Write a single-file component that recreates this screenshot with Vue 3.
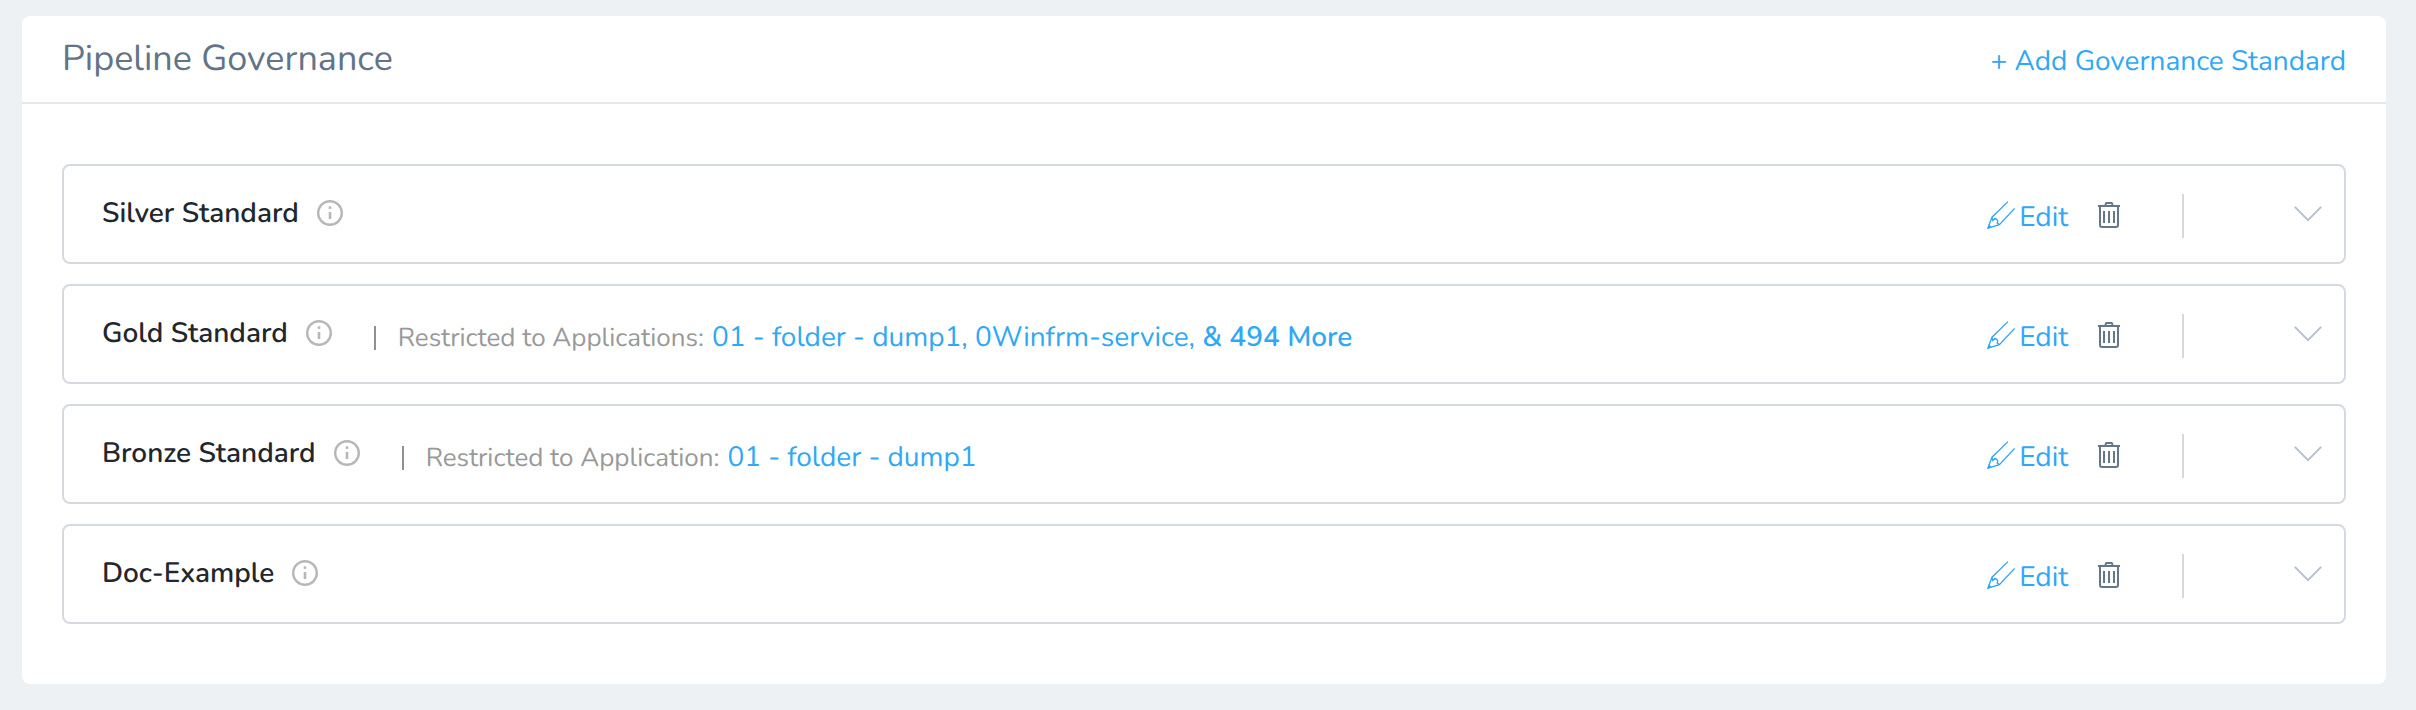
<script setup>
import { ref } from 'vue'

const standards = ref([
  { id: 1, name: 'Silver Standard', label: '', apps: '', more: '' },
  { id: 2, name: 'Gold Standard', label: 'Restricted to Applications:', apps: '01 - folder - dump1, 0Winfrm-service,', more: '& 494 More' },
  { id: 3, name: 'Bronze Standard', label: 'Restricted to Application:', apps: '01 - folder - dump1', more: '' },
  { id: 4, name: 'Doc-Example', label: '', apps: '', more: '' },
])
</script>

<template>
  <main class="card">
    <header class="head">
      <h1 class="title">Pipeline Governance</h1>
      <button class="link add" type="button">+ Add Governance Standard</button>
    </header>
    <ul class="list">
      <li v-for="s in standards" :key="s.id" class="row">
        <h2 class="name">{{ s.name }}</h2>
        <button class="icon info" type="button" :aria-label="'About ' + s.name">
          <svg width="26" height="26" viewBox="0 0 26 26" fill="none" stroke="#b7b7b7">
            <circle cx="13" cy="13" r="11.8" stroke-width="2.4" />
            <path d="M13 12v7" stroke-width="2.6" />
            <path d="M13 6.3v2.6" stroke-width="2.6" />
          </svg>
        </button>
        <p v-if="s.label" class="scope">
          <span class="bar"></span>
          <span class="label">{{ s.label }}</span>
          <a class="link" href="#">{{ s.apps }} <b v-if="s.more" class="more">{{ s.more }}</b></a>
        </p>
        <div class="actions">
          <button class="link edit" type="button">
            <svg width="28" height="28" viewBox="0 0 28 28" fill="none" stroke="#2fa8f5" stroke-width="1.3">
              <path d="M21 .6 5 16.2.8 27.2 12.4 23.6 27.6 7.4" />
              <path d="M5 16.200 5.800 19.600 8.200 17.400C10.600 18.600 11.400 20.200 10.200 22L12.400 23.600" />
              <path d="M.4 27.600 2 23 4.600 26.200z" fill="#2fa8f5" stroke="none" />
            </svg>
            <span>Edit</span>
          </button>
          <button class="icon trash" type="button" :aria-label="'Delete ' + s.name">
            <svg width="22" height="26" viewBox="0 0 22 26" fill="none" stroke="#65768a" stroke-width="2">
              <path d="M0 4h22" />
              <path d="M7.600 4V2.200Q7.600 1 8.800 1h4.400q1.200 0 1.200 1.200V4" />
              <path d="M2 4v19q0 2 2 2h14q2 0 2-2V4" />
              <path d="M6 9v12M11 9v12M16 9v12" />
            </svg>
          </button>
          <span class="divider"></span>
          <button class="icon" type="button" :aria-label="'Expand ' + s.name">
            <svg width="28" height="16" viewBox="0 0 28 16" fill="none" stroke="#b6c0cd" stroke-width="2">
              <path d="M.8.9 14 14.200 27.200.9" />
            </svg>
          </button>
        </div>
      </li>
    </ul>
  </main>
</template>

<style>
body {
  background: #edf1f4;
}
</style>

<style scoped>
.card {
  margin: 16px 30px 26px 22px;
  background: #fff;
  border-radius: 8px;
  font-family: Nunito, Lato, sans-serif;
  font-size: 28px;
  line-height: 36px;
  text-rendering: geometricPrecision;
}
.head {
  display: flex;
  align-items: center;
  justify-content: space-between;
  height: 86px;
  padding: 0 40px;
  border-bottom: 2px solid #e3e8ec;
}
.title {
  margin: 0;
  font-size: 36px;
  font-weight: 400;
  color: #637488;
}
button {
  padding: 0;
  border: 0;
  background: none;
  font: inherit;
  text-rendering: inherit;
  cursor: pointer;
}
.link {
  color: #2fa8f5;
  text-decoration: none;
}
.add {
  padding-top: 4px;
}
.list {
  display: flex;
  flex-direction: column;
  gap: 20px;
  margin: 0;
  padding: 60px 40px;
  list-style: none;
}
.row {
  display: flex;
  align-items: center;
  box-sizing: border-box;
  min-height: 100px;
  padding: 0 22px 0 38px;
  border: 2px solid #d5dae0;
  border-radius: 8px;
}
.name {
  margin: 0;
  padding-bottom: 2px;
  font-size: 28px;
  font-weight: 600;
  color: #22272d;
}
.icon {
  display: flex;
}
.info {
  margin: 0 0 2px 18px;
}
.scope {
  display: flex;
  align-items: baseline;
  margin: 0 0 0 42px;
  padding-top: 8px;
}
.bar {
  align-self: center;
  width: 2px;
  height: 24px;
  margin-right: 22px;
  background: #8f9094;
}
.label {
  margin-right: 8px;
  font-size: 26px;
  color: #999;
}
.more {
  font-weight: 600;
}
.actions {
  display: flex;
  align-items: center;
  margin-left: auto;
}
.edit {
  display: flex;
  align-items: center;
  gap: 4px;
  padding-top: 6px;
}
.edit svg {
  margin-bottom: 4px;
}
.trash {
  margin: 2px 0 0 30px;
}
.divider {
  width: 2px;
  height: 44px;
  margin: 4px 110px 0 62px;
  background: #d5dae0;
}
</style>
